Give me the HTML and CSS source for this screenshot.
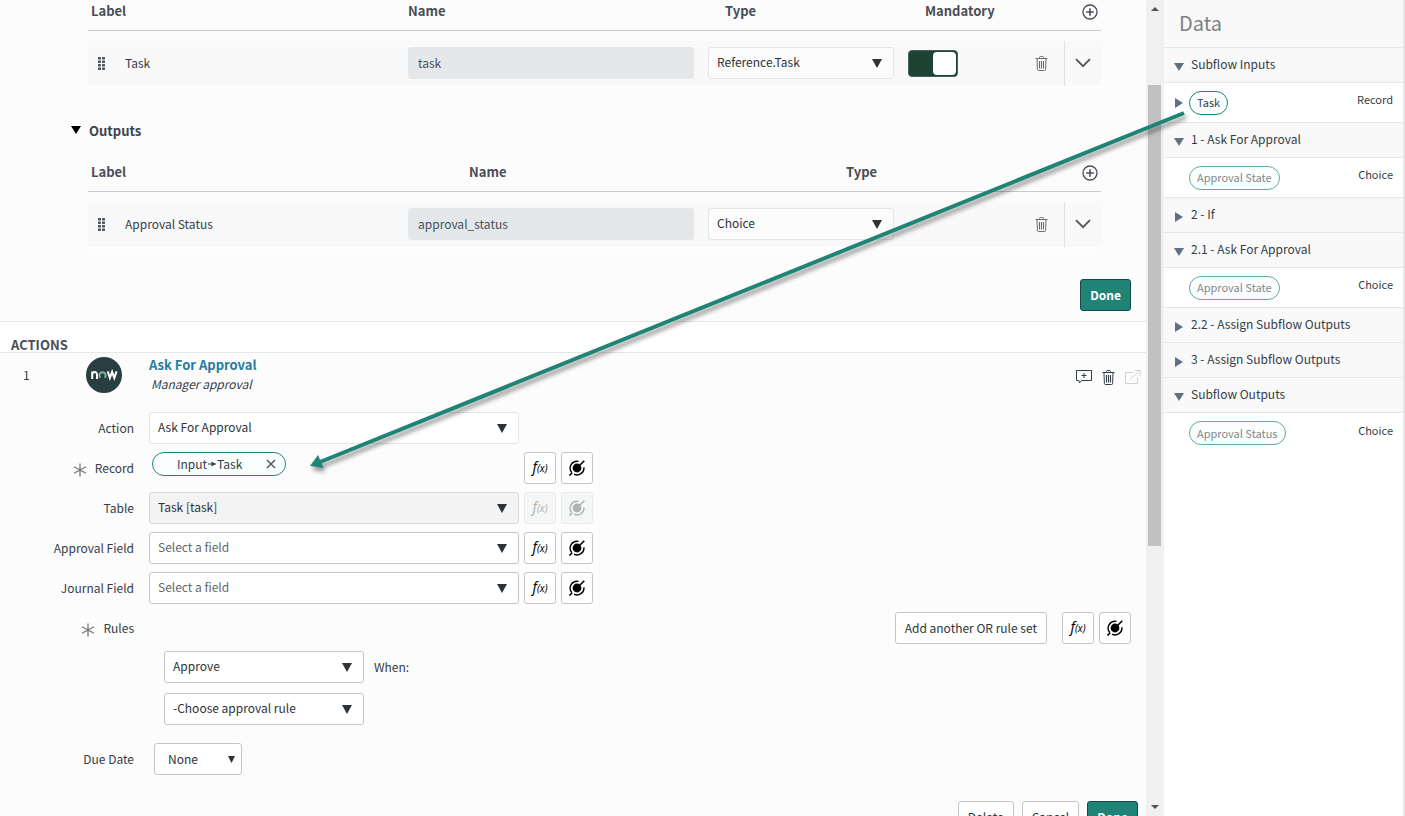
FILE: index.html
```html
<!DOCTYPE html>
<html lang="en">
<head>
<meta charset="utf-8">
<title>Subflow Designer</title>
<link rel="stylesheet" href="styles.css">
</head>
<body>
<svg class="defs" aria-hidden="true">
  <symbol id="i-caret" viewBox="0 0 10 9" preserveAspectRatio="none"><path d="M0 0h10L5 9z"/></symbol>
  <symbol id="i-drag" viewBox="0 0 7 13"><path d="M0 0h3v2.500H0zM4 0h3v2.500H4zM0 3.500h3V6H0zM4 3.500h3V6H4zM0 7h3v2.500H0zM4 7h3v2.500H4zM0 10.500h3V13H0zM4 10.500h3V13H4z"/></symbol>
  <symbol id="i-plus" viewBox="0 0 16 16"><g fill="none" stroke="currentColor" stroke-width="1.300"><circle cx="8" cy="8" r="7"/><path d="M8 4.200v7.600M4.200 8h7.600" stroke-width="1.600"/></g></symbol>
  <symbol id="i-trash" viewBox="0 0 13 15"><g fill="none" stroke="currentColor"><path d="M0.500 2.500h12M4.500 2.500v-1q0-1 1-1h2q1 0 1 1v1M2 3l.4 10.500q.1 1 1 1h6.200q.9 0 1-1L11 3"/><path d="M4.500 5v7.500M6.500 5v7.500M8.500 5v7.500" stroke-width="1.100"/></g></symbol>
  <symbol id="i-chev" viewBox="0 0 16 10"><path d="M1 1.200 8 8.200 15 1.200" fill="none" stroke="currentColor" stroke-width="1.900"/></symbol>
  <symbol id="i-star" viewBox="0 0 14 14"><path d="M7 .5v13M1 3.700l12 6.600M13 3.700 1 10.300" fill="none" stroke="currentColor" stroke-width="1.300"/></symbol>
  <symbol id="i-x" viewBox="0 0 10 10"><path d="M1 1l8 8M9 1 1 9" fill="none" stroke="currentColor" stroke-width="1.500"/></symbol>
  <symbol id="i-pick" viewBox="0 0 16 16"><circle cx="8" cy="8" r="4.400" fill="currentColor"/><g fill="none" stroke="currentColor" stroke-width="1.400"><path d="M9.500 1.400A6.900 6.900 0 0 0 2.800 12.600M14.900 7.300A6.900 6.900 0 0 1 5 14.200"/><path d="M.5 15.500 3.200 12.800M10.500 5.500 15.300.7" stroke-width="1.600"/></g></symbol>
  <symbol id="i-note" viewBox="0 0 16 14"><path d="M.5.500h15v10H5.500l-2 2.500-.6-2.500H.5zM8 3v5M5.500 5.500h5" fill="none" stroke="currentColor"/></symbol>
  <symbol id="i-open" viewBox="0 0 16 14"><path d="M8.500 2.500h-8v11h12V7.500M5.500 9 14.500.8M10 .5h5.300v5" fill="none" stroke="currentColor"/></symbol>
</svg>

<div class="app">
  <main class="main">
    <section class="params">
      <table class="grid">
        <thead><tr class="head head-four"><th>Label</th><th>Name</th><th>Type</th><th>Mandatory</th><th><button class="icon-btn" aria-label="Add input"><svg class="plus"><use href="#i-plus"/></svg></button></th></tr></thead>
        <tbody><tr class="row">
          <td class="drag"><svg class="drag-icon"><use href="#i-drag"/></svg></td>
          <td>Task</td>
          <td><input class="name" aria-label="Name" value="task" readonly></td>
          <td><div class="select soft"><select aria-label="Type"><option>Reference.Task</option></select><svg class="caret"><use href="#i-caret"/></svg></div></td>
          <td><input class="toggle" type="checkbox" aria-label="Mandatory" checked></td>
          <td><button class="icon-btn" aria-label="Delete input"><svg class="trash"><use href="#i-trash"/></svg></button></td>
          <td class="expand"><button class="icon-btn" aria-label="Expand input"><svg class="chev"><use href="#i-chev"/></svg></button></td>
        </tr></tbody>
      </table>

      <h2 class="outputs"><svg class="caret"><use href="#i-caret"/></svg>Outputs</h2>

      <table class="grid">
        <thead><tr class="head head-three"><th>Label</th><th>Name</th><th>Type</th><th><button class="icon-btn" aria-label="Add output"><svg class="plus"><use href="#i-plus"/></svg></button></th></tr></thead>
        <tbody><tr class="row">
          <td class="drag"><svg class="drag-icon"><use href="#i-drag"/></svg></td>
          <td>Approval Status</td>
          <td><input class="name" aria-label="Name" value="approval_status" readonly></td>
          <td><div class="select soft"><select aria-label="Type"><option>Choice</option></select><svg class="caret"><use href="#i-caret"/></svg></div></td>
          <td></td>
          <td><button class="icon-btn" aria-label="Delete output"><svg class="trash"><use href="#i-trash"/></svg></button></td>
          <td class="expand"><button class="icon-btn" aria-label="Expand output"><svg class="chev"><use href="#i-chev"/></svg></button></td>
        </tr></tbody>
      </table>
      <div class="params-foot"><button class="btn primary">Done</button></div>
    </section>

    <h2 class="actions-title">ACTIONS</h2>

    <section class="step">
      <header class="step-head">
        <span class="step-no">1</span>
        <svg class="logo" viewBox="0 0 36 36" role="img" aria-label="now">
          <circle cx="18" cy="18" r="18" fill="#293e40"/>
          <g fill="none" stroke-width="2">
            <path d="M6.200 22v-7.600M6.200 18q0-2.900 2.400-2.900t2.400 2.900v4" stroke="#fff"/>
            <path d="M14.300 20.800a3.200 3.200 0 1 1 4.400 0" stroke="#81b5a1"/>
            <path d="M21.700 14.400l2.200 6.600 2.200-6.200 2.200 6.200 2.300-6.600" stroke="#fff"/>
          </g>
        </svg>
        <div class="step-text"><a class="step-name" href="#">Ask For Approval</a><em class="step-note">Manager approval</em></div>
        <div class="step-tools">
          <button class="icon-btn" aria-label="Add comment"><svg class="tool"><use href="#i-note"/></svg></button>
          <button class="icon-btn" aria-label="Delete step"><svg class="trash"><use href="#i-trash"/></svg></button>
          <button class="icon-btn faint" aria-label="Open action" disabled><svg class="tool"><use href="#i-open"/></svg></button>
        </div>
      </header>

      <div class="form">
        <div class="field">
          <label class="lbl" for="action">Action</label>
          <div class="select soft wide"><select id="action"><option>Ask For Approval</option></select><svg class="caret"><use href="#i-caret"/></svg></div>
        </div>
        <div class="field">
          <span class="lbl"><svg class="star"><use href="#i-star"/></svg>Record</span>
          <div class="pill-box"><span class="pill data-pill">Input<svg class="join" viewBox="0 0 8 6"><path d="M0 3h8" stroke="currentColor"/><path d="M3.500.500 7.500 3 3.500 5.500z"/></svg>Task<button class="icon-btn" aria-label="Remove"><svg class="x"><use href="#i-x"/></svg></button></span></div>
          <button class="sq fx" aria-label="Function"><i>f</i><small>(x)</small></button>
          <button class="sq" aria-label="Data picker"><svg class="pick"><use href="#i-pick"/></svg></button>
        </div>
        <div class="field">
          <label class="lbl" for="table">Table</label>
          <div class="select off wide"><select id="table" disabled><option>Task [task]</option></select><svg class="caret"><use href="#i-caret"/></svg></div>
          <button class="sq fx" aria-label="Function" disabled><i>f</i><small>(x)</small></button>
          <button class="sq" aria-label="Data picker" disabled><svg class="pick"><use href="#i-pick"/></svg></button>
        </div>
        <div class="field">
          <label class="lbl" for="approval">Approval Field</label>
          <div class="select empty wide"><select id="approval"><option>Select a field</option></select><svg class="caret"><use href="#i-caret"/></svg></div>
          <button class="sq fx" aria-label="Function"><i>f</i><small>(x)</small></button>
          <button class="sq" aria-label="Data picker"><svg class="pick"><use href="#i-pick"/></svg></button>
        </div>
        <div class="field">
          <label class="lbl" for="journal">Journal Field</label>
          <div class="select empty wide"><select id="journal"><option>Select a field</option></select><svg class="caret"><use href="#i-caret"/></svg></div>
          <button class="sq fx" aria-label="Function"><i>f</i><small>(x)</small></button>
          <button class="sq" aria-label="Data picker"><svg class="pick"><use href="#i-pick"/></svg></button>
        </div>
        <div class="field rules">
          <span class="lbl"><svg class="star"><use href="#i-star"/></svg>Rules</span>
          <button class="btn add">Add another OR rule set</button>
          <button class="sq fx" aria-label="Function"><i>f</i><small>(x)</small></button>
          <button class="sq" aria-label="Data picker"><svg class="pick"><use href="#i-pick"/></svg></button>
        </div>
        <div class="ruleset">
          <div class="rule"><div class="select"><select id="outcome" aria-label="Outcome"><option>Approve</option></select><svg class="caret"><use href="#i-caret"/></svg></div><label for="outcome">When:</label></div>
          <div class="rule"><div class="select"><select aria-label="Approval rule"><option>-Choose approval rule</option></select><svg class="caret"><use href="#i-caret"/></svg></div></div>
        </div>
        <div class="field due">
          <label class="lbl" for="due">Due Date</label>
          <div class="select short"><select id="due"><option>None</option></select><svg class="caret"><use href="#i-caret"/></svg></div>
        </div>
      </div>
      <footer class="step-foot"><button class="btn">Delete</button><button class="btn">Cancel</button><button class="btn primary">Done</button></footer>
    </section>
  </main>

  <div class="scroll" aria-hidden="true">
    <svg class="scroll-arrow up"><use href="#i-caret"/></svg>
    <div class="track"><div class="thumb"></div></div>
    <svg class="scroll-arrow"><use href="#i-caret"/></svg>
  </div>

  <aside class="data">
    <h1 class="data-title">Data</h1>
    <h3 class="group"><svg class="tri"><use href="#i-caret"/></svg>Subflow Inputs</h3>
    <div class="item"><svg class="tri shut"><use href="#i-caret"/></svg><span class="pill">Task</span><span class="kind">Record</span></div>
    <h3 class="group"><svg class="tri"><use href="#i-caret"/></svg>1 - Ask For Approval</h3>
    <div class="item leaf"><span class="pill dim">Approval State</span><span class="kind">Choice</span></div>
    <h3 class="group"><svg class="tri shut"><use href="#i-caret"/></svg>2 - If</h3>
    <h3 class="group"><svg class="tri"><use href="#i-caret"/></svg>2.1 - Ask For Approval</h3>
    <div class="item leaf"><span class="pill dim">Approval State</span><span class="kind">Choice</span></div>
    <h3 class="group"><svg class="tri shut"><use href="#i-caret"/></svg>2.2 - Assign Subflow Outputs</h3>
    <h3 class="group"><svg class="tri shut"><use href="#i-caret"/></svg>3 - Assign Subflow Outputs</h3>
    <h3 class="group"><svg class="tri"><use href="#i-caret"/></svg>Subflow Outputs</h3>
    <div class="item leaf"><span class="pill dim">Approval Status</span><span class="kind">Choice</span></div>
  </aside>
</div>

<svg class="link-arrow" viewBox="0 0 880 370" width="880" height="370" aria-hidden="true">
  <path d="M880 11 16 360" stroke="#1f8476" stroke-width="4"/>
  <path d="M6 364 14 353 19.500 366z" fill="#1f8476"/>
</svg>
</body>
</html>
```
FILE: styles.css
```css
* { box-sizing: border-box; }
body {
  margin: 0;
  font: 12px/20px "Noto Sans CJK SC", "Open Sans", sans-serif;
  color: #343d47;
  background: #fff;
  overflow: hidden;
}
button, input, select { font: inherit; color: inherit; }
h1, h2, h3 { margin: 0; }
svg { display: block; fill: currentColor; overflow: visible; }
.defs { position: absolute; width: 0; height: 0; overflow: hidden; }

.app { display: flex; height: 100vh; }
.main { flex: 1; min-width: 0; overflow: hidden; background: #fcfcfc; }

/* Inputs and outputs */
.params { border-bottom: 1px solid #e5e6e8; padding-bottom: 10px; }
.grid, .grid thead, .grid tbody { display: block; }
.grid { margin: 0 45px 0 88px; }
.head {
  display: grid;
  align-items: end;
  height: 31px;
  padding: 0 3px 9px;
  border-bottom: 1px solid #c9cacb;
}
.head-four { grid-template-columns: 317px 317px 200px 1fr auto; }
.head-three { grid-template-columns: 378px 377px 1fr auto; height: 41px; }
.head th { padding: 0; text-align: left; font-size: 13px; font-weight: 700; color: #494e54; }
.row {
  display: grid;
  grid-template-columns: 37px 283px 286px 186px 1fr 29px 37px;
  align-items: center;
  height: 47px;
  margin-top: 10px;
  background: #f9f9f9;
  border-bottom: 2px solid #fff;
}
.row td { padding: 0 0 1px; }
.row td:nth-child(4) { margin-left: 14px; margin-right: -14px; }
.row td:nth-child(5) { padding-left: 28px; }
.row .drag { padding-left: 10px; color: #555b63; }
.drag-icon { width: 7px; height: 13px; }
.name {
  display: block;
  width: 100%;
  height: 32px;
  padding: 0 10px 1px;
  border: 0;
  border-radius: 3px;
  background: #e4e8eb;
  color: #4a4f55;
}
.icon-btn { display: block; padding: 0; border: 0; background: none; }
.plus { width: 16px; height: 16px; margin-bottom: 1px; }
.trash { width: 13px; height: 15px; }
.row .trash { color: #666d75; }
.expand { display: grid; place-items: center; align-self: stretch; border-left: 1px solid #e0e3e6; }
.chev { width: 16px; height: 10px; color: #54585d; }

.select { display: grid; grid-template-columns: 1fr 22px; align-items: center; height: 32px; color: #2e3338; }
.select select {
  grid-area: 1 / 1 / 2 / 3;
  appearance: none;
  width: 100%;
  height: 32px;
  padding: 0 26px 2px 8px;
  border: 1px solid #c3c5c7;
  border-radius: 3px;
  background: #fff;
  color: inherit;
  opacity: 1;
}
.caret { width: 10px; height: 9px; }
.select .caret { grid-area: 1 / 2; pointer-events: none; }
.soft select { border-color: #e3e6e9; }
.row .select select { background: #fcfcfc; }
.off select { background: #f3f3f3; border-color: #d8d9da; }
.empty select { color: #63676b; }
.wide { width: 370px; }

.toggle {
  appearance: none;
  display: grid;
  justify-content: end;
  width: 50px;
  height: 27px;
  margin: 0;
  padding: 1px;
  border: 1px solid #40635a;
  border-radius: 4px;
  background: #1e4234;
}
.toggle::before { content: ""; width: 23px; height: 23px; border-radius: 4px; background: #fff; }

.outputs {
  display: flex;
  align-items: center;
  gap: 8px;
  margin-top: 33px;
  padding-left: 71px;
  font-size: 13px;
  font-weight: 700;
  color: #3c444d;
}
.outputs .caret { color: #000; height: 8px; margin-bottom: 2px; }
.outputs + .grid { margin-top: 10px; }

.params-foot { display: flex; justify-content: flex-end; margin-top: 30px; padding-right: 15px; }
.btn {
  height: 32px;
  padding: 0 9px;
  border: 1px solid #c3c5c7;
  border-radius: 3px;
  background: #fff;
  color: #2e3338;
}
.primary { background: #1f8476; border-color: #154b41; color: #fff; font-weight: 700; }

.actions-title {
  height: 31px;
  padding: 13px 11px 0;
  border-bottom: 1px solid #e5e6e8;
  background: #fff;
  font-size: 13px;
  line-height: 20px;
  font-weight: 700;
  color: #494e54;
}

/* Action step */
.step-head { display: flex; align-items: center; height: 44px; }
.step-no { width: 86px; padding-left: 23px; }
.logo { width: 36px; height: 36px; }
.step-text { flex: 1; display: flex; flex-direction: column; padding: 0 0 2px 27px; }
.step-name { color: #277c9e; font-size: 13px; font-weight: 700; text-decoration: none; line-height: 20px; }
.step-note { padding-left: 2px; line-height: 18px; }
.step-tools { display: flex; align-items: center; gap: 10px; padding: 4px 5px 0 0; }
.tool { width: 16px; height: 14px; }
.faint { color: #d0d1d3; }

.form { padding-top: 15px; }
.field { display: flex; align-items: center; height: 32px; margin-bottom: 8px; }
.lbl { display: flex; align-items: center; justify-content: flex-end; gap: 8px; width: 134px; margin-right: 15px; }
.star { width: 14px; height: 14px; margin-top: 4px; color: #75797e; }
.pill-box { width: 370px; padding: 0 0 8px 3px; }
.pill {
  display: inline-flex;
  align-items: center;
  height: 24px;
  padding: 0 7px 1px;
  border: 1px solid #1f8476;
  border-radius: 12px;
  background: #fafeff;
  font-size: 11px;
}
.data-pill { width: 134px; padding: 0 9px 1px 24px; font-size: 12px; }
.join { width: 8px; height: 6px; margin: 0 1px; }
.pill .icon-btn { margin-left: auto; }
.x { width: 10px; height: 10px; color: #54585d; }
.sq {
  display: flex;
  align-items: center;
  justify-content: center;
  width: 32px;
  height: 32px;
  margin-left: 5px;
  padding: 0;
  border: 1px solid #c3c5c7;
  border-radius: 3px;
  background: #fff;
  color: #000;
}
.sq:disabled { background: #f5f7f7; border-color: #e8eaeb; color: #b0b2b4; }
.fx { align-items: baseline; line-height: 28px; font-family: "Noto Sans", sans-serif; font-style: italic; }
.fx i { font-size: 14px; }
.fx small { font-size: 10px; }
.pick { width: 16px; height: 16px; }
.rules { padding-right: 15px; }
.rules .lbl { margin-right: auto; }
.add + .sq { margin-left: 15px; }
.ruleset { display: grid; gap: 10px; padding-left: 164px; margin-top: -1px; }
.rule { display: flex; align-items: center; gap: 10px; }
.rule .select { width: 200px; }
.due { margin: 18px 0 0; }
.short { width: 88px; margin-left: 5px; grid-template-columns: 1fr 14px; }
.short select { padding: 0 14px 0 13px; }
.short .caret { width: 7px; height: 7px; }
.step-foot { display: flex; justify-content: flex-end; gap: 8px; margin-top: 26px; padding-right: 8px; }

/* Scroll bar */
.scroll { display: flex; flex-direction: column; align-items: center; width: 18px; padding: 7px 3px 7px 2px; background: #f0f0f0; }
.scroll-arrow { width: 8px; height: 4px; color: #505050; }
.up { transform: rotate(180deg); }
.track { flex: 1; width: 13px; padding-top: 74px; }
.thumb { height: 64%; background: #c1c1c1; }

/* Data panel */
.data { width: 241px; border-right: 2px solid #e5e6e8; background: #fff; }
.data-title {
  height: 48px;
  padding: 8px 15px;
  border-bottom: 1px solid #e5e6e8;
  background: #f9f9f9;
  font-size: 20px;
  line-height: 29px;
  font-weight: 400;
  color: #7d8084;
}
.group, .item { display: flex; border-bottom: 1px solid #e5e6e8; }
.group {
  align-items: center;
  gap: 7px;
  height: 35px;
  padding: 0 0 2px 10px;
  background: #f9f9f9;
  font-size: 12px;
  font-weight: 400;
}
.tri { width: 10px; height: 8px; color: #5f7186; }
.group .tri { margin-top: 6px; }
.shut { transform: rotate(-90deg); }
.item { align-items: center; height: 40px; padding: 0 10px; }
.item:last-child { border-bottom: 0; }
.item .pill { margin-left: 5px; }
.leaf .pill { margin-left: 15px; }
.dim { border-color: #62a99f; color: #85898c; }
.kind { margin-left: auto; padding-bottom: 7px; font-size: 11px; }

.link-arrow { position: absolute; left: 304px; top: 102px; pointer-events: none; filter: drop-shadow(2px 4px 2px rgba(0, 0, 0, 0.4)); }
```
